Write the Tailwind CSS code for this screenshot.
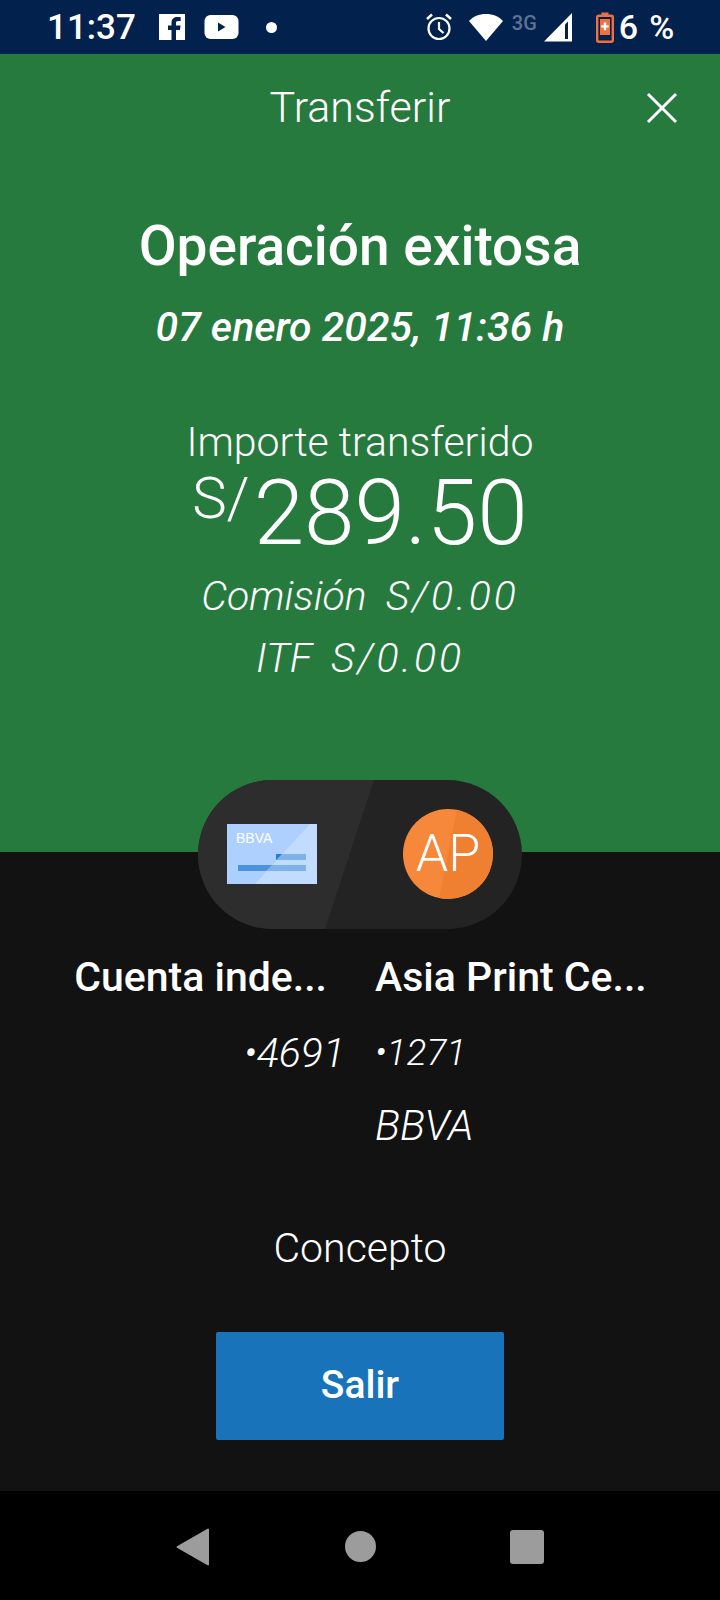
<!DOCTYPE html>
<html lang="es">
<head>
<meta charset="utf-8">
<script src="https://cdn.jsdelivr.net/npm/@tailwindcss/browser@4"></script>
</head>
<body class="m-0 bg-black">
<div class="w-[720px] h-[1600px] flex flex-col overflow-hidden text-white font-['Roboto','Noto_Sans',sans-serif]">

  <!-- status bar -->
  <div class="h-[54px] shrink-0 bg-[#03214d] flex items-center pl-[47px]">
    <span class="text-[35px] leading-none font-medium">11:37</span>
    <svg class="ml-[22px]" width="28" height="28" viewBox="0 0 28 28"><path fill="#fff" d="M1 1h26v26H18V17h4l.6-4.500H18v-2.500c0-1.300.5-2 2-2h2.700V4.200C22 4.100 20.800 4 19.500 4 16 4 13.500 6 13.500 9.700v2.800H10V17h3.500v10H1z"/></svg>
    <svg class="ml-[18px]" width="35" height="26" viewBox="0 0 35 26"><rect x="0.500" y="1" width="34" height="24" rx="6" fill="#fff"/><path d="M14 8.500v9l7.500-4.500z" fill="#03214d"/></svg>
    <span class="ml-[27px] w-[11px] h-[11px] rounded-full bg-white"></span>
    <svg class="ml-[147px]" width="30" height="30" viewBox="0 0 30 30" fill="none" stroke="#fff" stroke-width="2.200"><circle cx="15" cy="16.500" r="10.500"/><path d="M15 10v7l4.500 4"/><path d="M3 7l5-4.500M27 7l-5-4.500" stroke-width="2.500"/></svg>
    <svg class="ml-[15px]" width="34" height="28" viewBox="0 0 34 28"><path fill="#fff" d="M0 8C4 3.500 10 1 17 1s13 2.500 17 7L17 28z"/></svg>
    <span class="ml-[9px] -mt-[8px] text-[20px] w-[32px] leading-none font-medium text-[#5d7392]">3G</span>
    <svg width="30" height="30" viewBox="0 0 30 30"><path fill="#fff" d="M0 29.500 28 1v28.500z"/><path fill="#03214d" d="M21 12.500v14.500h3v-17.500z"/></svg>
    <svg class="ml-[22px]" width="18" height="31" viewBox="0 0 18 31"><rect x="1.200" y="3.700" width="15.600" height="26" rx="1.500" fill="none" stroke="#f0703f" stroke-width="2.400"/><rect x="5.500" y="0.500" width="7" height="3.500" fill="#f0703f"/><rect x="4" y="7" width="10" height="16" fill="#f0703f"/><path d="M7.800 10.500h2.400v2.700h2.600v2.400h-2.600v2.700H7.800v-2.700H5.200v-2.400h2.600z" fill="#fff"/></svg>
    <span class="ml-[5px] text-[34px] leading-none font-medium">6</span>
    <span class="ml-[11px] text-[34px] leading-none font-medium">%</span>
  </div>

  <!-- green header -->
  <div class="h-[798px] shrink-0 bg-[#277a3e] flex flex-col items-center">
    <div class="relative w-full h-[106px] flex items-center justify-center">
      <span class="text-[43px] font-light leading-none">Transferir</span>
      <svg class="absolute left-[646px] top-[38px]" width="32" height="32" viewBox="0 0 32 32" stroke="#fff" stroke-width="3"><path d="M2 2l28 28M30 2 2 30"/></svg>
    </div>
    <div class="mt-[56px] text-[55px] leading-[60px] font-medium">Operación exitosa</div>
    <div class="mt-[30px] text-[41px] leading-[42px] font-medium italic">07 enero 2025, 11:36 h</div>
    <div class="mt-[73px] text-[41px] leading-[42px] font-light">Importe transferido</div>
    <div class="flex items-start h-[76px] mt-[12px]">
      <span class="text-[58px] leading-[50px] font-light -mt-[2px]">S/</span>
      <span class="text-[91px] leading-[76px] font-light ml-[4px]">289.50</span>
    </div>
    <div class="mt-[21px] text-[41px] leading-[48px] font-light italic flex gap-[19px]"><span>Comisión</span><span class="tracking-[3px]">S/0.00</span></div>
    <div class="mt-[14px] text-[41px] leading-[48px] font-light italic flex gap-[19px]"><span>ITF</span><span class="tracking-[3px]">S/0.00</span></div>
  </div>

  <!-- dark content -->
  <div class="h-[639px] shrink-0 bg-[#121212] flex flex-col items-center">
    <div class="relative -mt-[72px] w-[324px] h-[149px] shrink-0 rounded-full overflow-hidden bg-[#232323] flex items-center justify-between pl-[29px] pr-[29px]">
      <svg class="absolute left-0 top-0" width="324" height="149" viewBox="0 0 324 149"><path fill="#2d2d2d" d="M0 0H176L127 149H0z"/></svg>
      <svg class="relative -mt-[2px]" width="90" height="60" viewBox="0 0 90 60">
        <rect width="90" height="60" fill="#aed0ff"/>
        <path d="M28 60 83 0h7v60z" fill="#c2dcff"/>
        <rect x="49" y="30" width="30" height="6" fill="#7db3ea"/>
        <path d="M49 36v-6h6z" fill="#2b7bcf"/>
        <rect x="11" y="41" width="68" height="6" fill="#7db3ea"/>
        <path d="M11 41h34l-6 6H11z" fill="#4b93dc"/>
        <text x="9" y="19" font-size="14" fill="#fff" font-family="Liberation Sans">BBVA</text>
      </svg>
      <div class="relative -mt-[2px] w-[90px] h-[90px] rounded-full overflow-hidden bg-[#f5883a] flex items-center justify-center">
        <svg class="absolute left-0 top-0" width="90" height="90" viewBox="0 0 90 90"><path d="M54 0h36v90H36z" fill="#ef7f31"/></svg>
        <span class="relative text-[52px] leading-none font-light">AP</span>
      </div>
    </div>

    <div class="w-full mt-[24px] grid grid-cols-[345px_1fr] gap-x-[30px]">
      <div class="flex flex-col items-end">
        <div class="text-[41px] leading-[48px] font-medium mr-[18px]">Cuenta inde...</div>
        <div class="mt-[28px] text-[41px] leading-[48px] font-light italic">•4691</div>
      </div>
      <div class="flex flex-col items-start">
        <div class="text-[41px] leading-[48px] font-medium">Asia Print Ce...</div>
        <div class="mt-[28px] text-[37px] leading-[48px] font-light italic">•1271</div>
        <div class="mt-[25px] text-[42px] leading-[48px] font-light italic">BBVA</div>
      </div>
    </div>

    <div class="mt-[74px] text-[41px] leading-[48px] font-light">Concepto</div>
    <div class="mt-[60px] w-[288px] h-[108px] bg-[#1873bb] rounded-[2px] flex items-center justify-center text-[39px] font-medium pb-[2px]">Salir</div>
  </div>

  <!-- nav bar -->
  <div class="flex-1 bg-black relative flex items-center">
    <svg class="absolute left-[176px] top-[37px]" width="34" height="38" viewBox="0 0 34 38"><path d="M32 1.500v35L1.500 19z" fill="#9c9c9c" stroke="#9c9c9c" stroke-width="2" stroke-linejoin="round"/></svg>
    <div class="absolute left-[345px] top-[40px] w-[31px] h-[31px] rounded-full bg-[#9c9c9c]"></div>
    <div class="absolute left-[510px] top-[39px] w-[34px] h-[34px] rounded-[3px] bg-[#9c9c9c]"></div>
  </div>
</div>
</body>
</html>
